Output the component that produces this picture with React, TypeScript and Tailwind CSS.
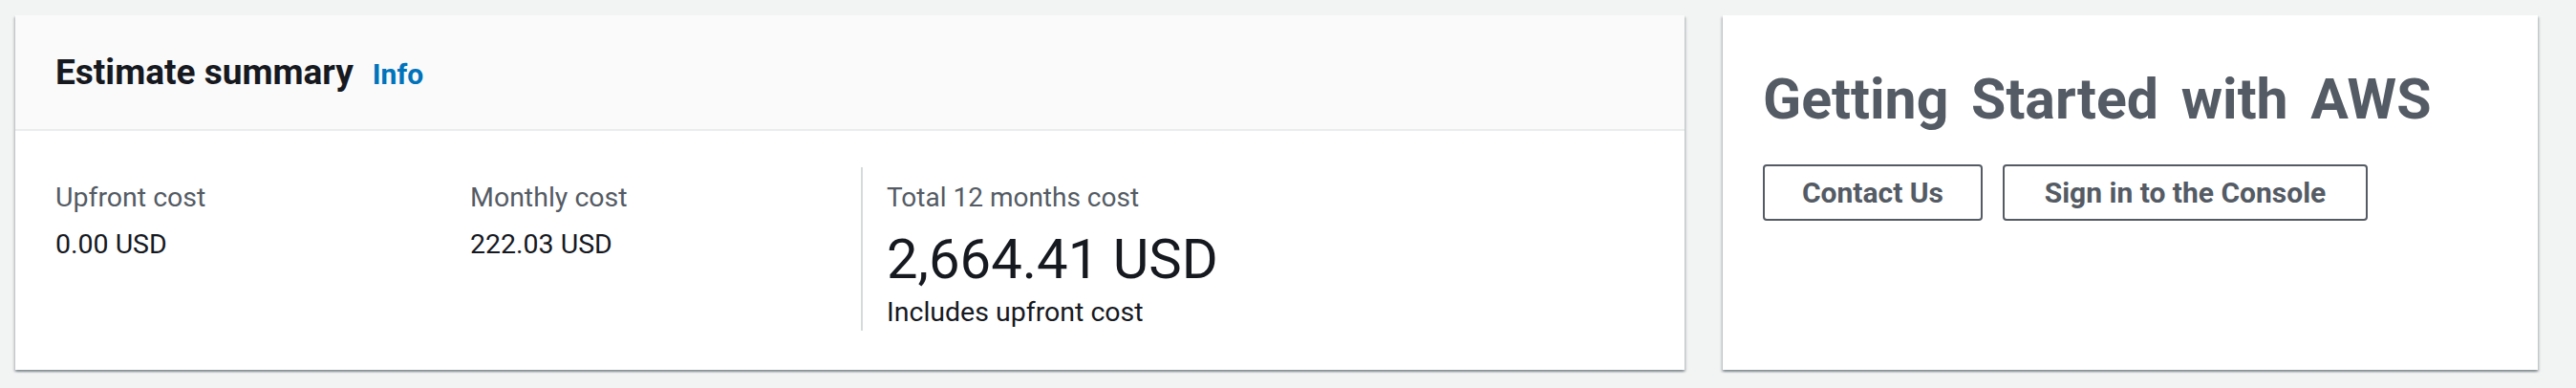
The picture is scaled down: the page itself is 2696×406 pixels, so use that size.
import React from "react";

const shadow =
  "shadow-[0_2px_2px_0_rgba(0,28,36,0.3),2px_2px_2px_0_rgba(0,28,36,0.12),-2px_2px_2px_0_rgba(0,28,36,0.12)]";

function Stat({ label, value }: { label: string; value: string }) {
  return (
    <div className="flex flex-col">
      <div className="text-[28.5px] leading-[44px] text-[#545b64]">{label}</div>
      <div className="mt-[5px] text-[28.5px] leading-[44px] text-[#16191f]">{value}</div>
    </div>
  );
}

export default function App() {
  return (
    <div className="w-[2696px] h-[406px] bg-[#f2f3f3] pt-[16px] pl-[16px] flex items-start gap-[40px] font-['Roboto','Noto_Sans',sans-serif] overflow-hidden">
      {/* Estimate summary card */}
      <div className={`w-[1747px] h-[371px] bg-white flex flex-col ${shadow}`}>
        <div className="h-[121px] shrink-0 bg-[#fafafa] border-b-2 border-[#eaeded] flex items-center pl-[42px] gap-[20px]">
          <h2 className="text-[37px] font-bold text-[#16191f]">Estimate summary</h2>
          <a className="text-[30px] font-bold text-[#0073bb] mt-[3px]">Info</a>
        </div>
        <div className="flex items-start pl-[42px] pt-[38px]">
          <div className="w-[434px] pt-[10px]">
            <Stat label="Upfront cost" value="0.00 USD" />
          </div>
          <div className="w-[409px] pt-[10px]">
            <Stat label="Monthly cost" value="222.03 USD" />
          </div>
          <div className="border-l-2 border-[#d5dbdb] pl-[25px] pt-[10px] flex flex-col">
            <div className="text-[28px] leading-[44px] text-[#545b64]">Total 12 months cost</div>
            <div className="mt-[10px] text-[58px] leading-[64px] text-[#16191f]">2,664.41 USD</div>
            <div className="mt-[5px] text-[28.5px] leading-[38px] text-[#16191f]">Includes upfront cost</div>
          </div>
        </div>
      </div>

      {/* Getting started card */}
      <div className={`w-[853px] h-[371px] bg-white flex flex-col pl-[42px] pt-[53px] ${shadow}`}>
        <h1 className="text-[59px] leading-[70px] font-bold text-[#545b64] [word-spacing:9px]">
          Getting Started with AWS
        </h1>
        <div className="mt-[33px] flex gap-[21px]">
          <button className="w-[230px] h-[59px] border-2 border-[#545b64] rounded-[4px] text-[30px] font-bold text-[#545b64] flex items-center justify-center">
            Contact Us
          </button>
          <button className="w-[382px] h-[59px] border-2 border-[#545b64] rounded-[4px] text-[30px] font-bold text-[#545b64] flex items-center justify-center">
            Sign in to the Console
          </button>
        </div>
      </div>
    </div>
  );
}
